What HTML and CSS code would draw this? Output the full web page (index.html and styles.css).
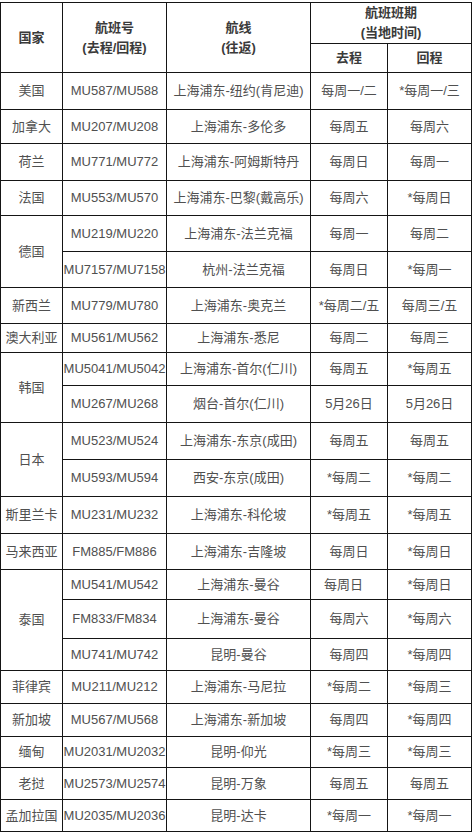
FILE: index.html
```html
<!DOCTYPE html>
<html lang="zh-CN">
<head>
<meta charset="utf-8">
<title>航班班期</title>
<link rel="stylesheet" href="styles.css">
</head>
<body>
<table class="sched">
<colgroup>
<col class="c-country"><col class="c-flight"><col class="c-route"><col class="c-out"><col class="c-back">
</colgroup>
<thead>
<tr class="r41">
<th rowspan="2">国家</th>
<th rowspan="2">航班号<br>(去程/回程)</th>
<th rowspan="2">航线<br>(往返)</th>
<th colspan="2">航班班期<br>(当地时间)</th>
</tr>
<tr class="r29">
<th>去程</th>
<th>回程</th>
</tr>
</thead>
<tbody>
<tr class="r37"><td>美国</td><td>MU587/MU588</td><td>上海浦东-纽约(肯尼迪)</td><td>每周一/二</td><td>*每周一/三</td></tr>
<tr class="r34"><td>加拿大</td><td>MU207/MU208</td><td>上海浦东-多伦多</td><td>每周五</td><td>每周六</td></tr>
<tr class="r37"><td>荷兰</td><td>MU771/MU772</td><td>上海浦东-阿姆斯特丹</td><td>每周日</td><td>每周一</td></tr>
<tr class="r35"><td>法国</td><td>MU553/MU570</td><td>上海浦东-巴黎(戴高乐)</td><td>每周六</td><td>*每周日</td></tr>
<tr class="r36"><td rowspan="2">德国</td><td>MU219/MU220</td><td>上海浦东-法兰克福</td><td>每周一</td><td>每周二</td></tr>
<tr class="r36"><td>MU7157/MU7158</td><td class="shr">杭州-法兰克福</td><td>每周日</td><td>*每周一</td></tr>
<tr class="r36"><td>新西兰</td><td>MU779/MU780</td><td>上海浦东-奥克兰</td><td>*每周二/五</td><td>每周三/五</td></tr>
<tr class="r29"><td>澳大利亚</td><td>MU561/MU562</td><td>上海浦东-悉尼</td><td>每周二</td><td>每周三</td></tr>
<tr class="r33"><td rowspan="2">韩国</td><td>MU5041/MU5042</td><td>上海浦东-首尔(仁川)</td><td>每周五</td><td>*每周五</td></tr>
<tr class="r37"><td>MU267/MU268</td><td>烟台-首尔(仁川)</td><td>5月26日</td><td>5月26日</td></tr>
<tr class="r37"><td rowspan="2">日本</td><td>MU523/MU524</td><td>上海浦东-东京(成田)</td><td>每周五</td><td>每周五</td></tr>
<tr class="r37"><td>MU593/MU594</td><td>西安-东京(成田)</td><td>*每周二</td><td>*每周二</td></tr>
<tr class="r37"><td>斯里兰卡</td><td>MU231/MU232</td><td>上海浦东-科伦坡</td><td>*每周五</td><td>*每周五</td></tr>
<tr class="r36"><td>马来西亚</td><td>FM885/FM886</td><td>上海浦东-吉隆坡</td><td>每周日</td><td>*每周日</td></tr>
<tr class="r30"><td rowspan="3">泰国</td><td>MU541/MU542</td><td>上海浦东-曼谷</td><td class="left">每周日</td><td>*每周日</td></tr>
<tr class="r39"><td>FM833/FM834</td><td>上海浦东-曼谷</td><td>每周六</td><td>*每周六</td></tr>
<tr class="r32"><td>MU741/MU742</td><td>昆明-曼谷</td><td>每周四</td><td>*每周四</td></tr>
<tr class="r33"><td>菲律宾</td><td>MU211/MU212</td><td>上海浦东-马尼拉</td><td>*每周二</td><td>*每周三</td></tr>
<tr class="r33"><td>新加坡</td><td>MU567/MU568</td><td>上海浦东-新加坡</td><td>每周四</td><td>*每周四</td></tr>
<tr class="r31"><td>缅甸</td><td>MU2031/MU2032</td><td>昆明-仰光</td><td>*每周三</td><td>*每周三</td></tr>
<tr class="r32"><td>老挝</td><td>MU2573/MU2574</td><td>昆明-万象</td><td>每周五</td><td>每周五</td></tr>
<tr class="r32"><td>孟加拉国</td><td>MU2035/MU2036</td><td>昆明-达卡</td><td>*每周一</td><td>*每周一</td></tr>
</tbody>
</table>
</body>
</html>
```
FILE: styles.css
```css
html, body {
  margin: 0;
  padding: 0;
  background: #ffffff;
}
body {
  padding-top: 2px;
  font-family: "Liberation Sans", "Noto Sans CJK SC", sans-serif;
  font-size: 13px;
  color: #505050;
}
.sched {
  border-collapse: collapse;
  table-layout: fixed;
  width: 472px;
}
.c-country { width: 62px; }
.c-flight { width: 104px; }
.c-route { width: 144px; }
.c-out { width: 77px; }
.c-back { width: 84px; }
.sched th,
.sched td {
  border: 1px solid #151515;
  padding: 0;
  text-align: center;
  vertical-align: middle;
  white-space: nowrap;
  overflow: hidden;
  line-height: 20px;
}
.sched th {
  font-weight: bold;
  color: #3a3a3a;
}
.shr { padding-left: 10px !important; }
.left { text-align: left !important; padding-left: 13px !important; }
.r29 { height: 29px; }
.r30 { height: 30px; }
.r31 { height: 31px; }
.r32 { height: 32px; }
.r33 { height: 33px; }
.r34 { height: 34px; }
.r35 { height: 35px; }
.r36 { height: 36px; }
.r37 { height: 37px; }
.r39 { height: 39px; }
.r41 { height: 41px; }
```
